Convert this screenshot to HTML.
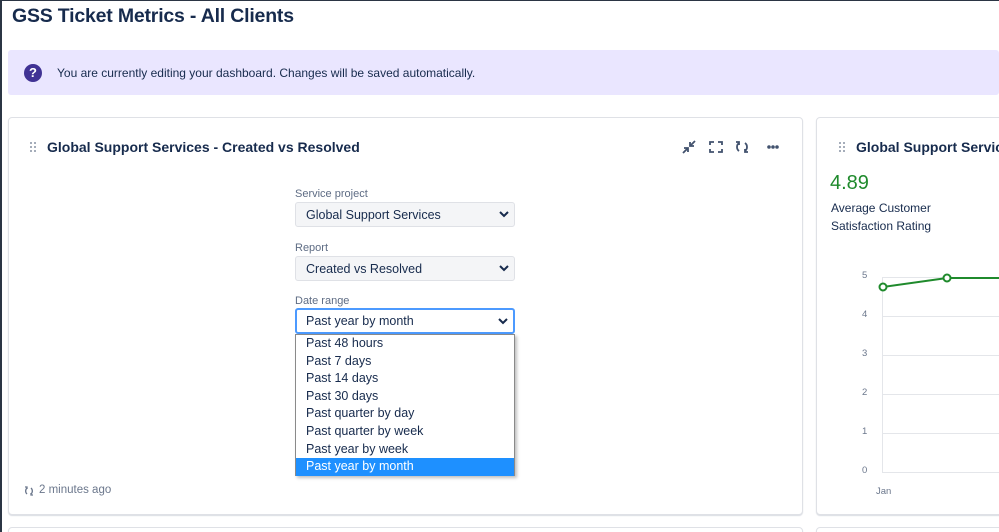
<!DOCTYPE html>
<html style="overflow:hidden"><head><style>
*{box-sizing:border-box;margin:0;padding:0}
html,body{width:999px;height:532px;overflow:hidden}
body{background:#fff;font-family:"Liberation Sans",sans-serif;color:#172b4d;position:relative}
.abs{position:absolute}
h1{position:absolute;left:12px;top:5px;font-size:19.5px;font-weight:bold;color:#172b4d;letter-spacing:-0.2px}
.banner{left:8px;top:50px;width:991px;height:45px;background:#eae6ff;border-radius:3px}
.q{left:24px;top:64px;width:18px;height:18px;border-radius:50%;background:#403294;color:#fff;font-size:13px;font-weight:bold;text-align:center;line-height:18px}
.card{border:1px solid #dfe1e6;border-radius:4px;background:#fff;box-shadow:0 1px 1px rgba(9,30,66,.15)}
.lbl{font-size:11px;color:#5e6c84}
.sel{width:220px;height:25px;background:#f4f5f7;border:1px solid #dfe1e6;border-radius:3px;font-size:12.5px;padding:5px 10px;color:#172b4d}
.sel svg{position:absolute;right:5px;top:8px}
.dd{left:295px;top:334px;width:220px;height:142px;border:1px solid #8a8a8a;background:#fff;font-size:12.5px;box-shadow:2px 2px 3px rgba(0,0,0,.25)}
.dd div{height:17.6px;line-height:17.6px;padding-left:10px;color:#172b4d}
.dd .on{background:#1e90ff;color:#fff}
.yl{font-size:9.5px;color:#6b778c;left:862px}
.gl{left:882px;width:117px;height:1px;background:#e4e6ea}
</style></head><body>
<div class="abs" style="left:0;top:0;width:2px;height:532px;background:#2b3544"></div>
<div class="abs" style="left:0;top:0;width:999px;height:1px;background:#2b3544"></div>
<h1>GSS Ticket Metrics - All Clients</h1>
<div class="abs banner"></div>
<div class="abs q">?</div>
<div class="abs" style="left:57px;top:66px;font-size:12px;color:#172b4d">You are currently editing your dashboard. Changes will be saved automatically.</div>

<div class="abs card" style="left:8px;top:117px;width:795px;height:398px"></div>
<div class="abs card" style="left:816px;top:117px;width:200px;height:398px"></div>
<div class="abs card" style="left:8px;top:527px;width:795px;height:20px"></div>
<div class="abs card" style="left:816px;top:527px;width:200px;height:20px"></div>

<svg class="abs" style="left:30px;top:142px" width="8" height="11"><g fill="#a5adba"><rect x="0" y="0" width="2" height="2"/><rect x="4" y="0" width="2" height="2"/><rect x="0" y="4" width="2" height="2"/><rect x="4" y="4" width="2" height="2"/><rect x="0" y="8" width="2" height="2"/><rect x="4" y="8" width="2" height="2"/></g></svg>
<div class="abs" style="left:47px;top:139px;font-size:14px;font-weight:bold;color:#172b4d">Global Support Services - Created vs Resolved</div>

<svg class="abs" style="left:681px;top:139px" width="100" height="16" fill="none" stroke="#42526e" stroke-width="1.8">
<path d="M2 14l5-5M3 9h4v4M14 2l-5 5M9 3v4h4"/>
<path d="M29 6V3h4M37 3h4v3M41 10v3h-4M33 13h-4v-3"/>
<path d="M58 4a5 5 0 0 0 0 8M55 3h3v3M64 12a5 5 0 0 0 0-8M67 13h-3v-3"/>
<circle cx="88" cy="8" r=".9" fill="#42526e"/><circle cx="92" cy="8" r=".9" fill="#42526e"/><circle cx="96" cy="8" r=".9" fill="#42526e"/>
</svg>

<div class="abs lbl" style="left:295px;top:188px">Service project</div>
<div class="abs sel" style="left:295px;top:202px">Global Support Services<svg width="10" height="7"><path d="M1 1l4 4 4-4" stroke="#172b4d" stroke-width="2" fill="none"/></svg></div>
<div class="abs lbl" style="left:295px;top:242px">Report</div>
<div class="abs sel" style="left:295px;top:256px">Created vs Resolved<svg width="10" height="7"><path d="M1 1l4 4 4-4" stroke="#172b4d" stroke-width="2" fill="none"/></svg></div>
<div class="abs lbl" style="left:295px;top:295px">Date range</div>
<div class="abs sel" style="left:295px;top:308px;height:26px;background:#fff;border:2px solid #4c9aff;padding:4px 9px">Past year by month<svg width="10" height="7"><path d="M1 1l4 4 4-4" stroke="#172b4d" stroke-width="2" fill="none"/></svg></div>
<div class="abs dd">
<div>Past 48 hours</div><div>Past 7 days</div><div>Past 14 days</div><div>Past 30 days</div><div>Past quarter by day</div><div>Past quarter by week</div><div>Past year by week</div><div class="on">Past year by month</div>
</div>

<svg class="abs" style="left:24px;top:486px" width="10" height="10" fill="none" stroke="#6b778c" stroke-width="1.3"><path d="M3 2a4 4 0 0 0 0 6M1 1h2v2M7 8a4 4 0 0 0 0-6M9 9H7V7"/></svg>
<div class="abs" style="left:39px;top:484px;font-size:11.5px;color:#6b778c">2 minutes ago</div>

<svg class="abs" style="left:839px;top:142px" width="8" height="11"><g fill="#a5adba"><rect x="0" y="0" width="2" height="2"/><rect x="4" y="0" width="2" height="2"/><rect x="0" y="4" width="2" height="2"/><rect x="4" y="4" width="2" height="2"/><rect x="0" y="8" width="2" height="2"/><rect x="4" y="8" width="2" height="2"/></g></svg>
<div class="abs" style="left:856px;top:139px;font-size:14px;font-weight:bold;color:#172b4d;white-space:nowrap">Global Support Services</div>
<div class="abs" style="left:830px;top:172px;font-size:20px;color:#1f8a2c">4.89</div>
<div class="abs" style="left:831px;top:199px;font-size:12px;line-height:18px;color:#172b4d">Average Customer<br>Satisfaction Rating</div>

<div class="abs yl" style="top:270px">5</div>
<div class="abs yl" style="top:309px">4</div>
<div class="abs yl" style="top:348px">3</div>
<div class="abs yl" style="top:387px">2</div>
<div class="abs yl" style="top:426px">1</div>
<div class="abs yl" style="top:465px">0</div>
<div class="abs gl" style="top:277px"></div>
<div class="abs gl" style="top:316px"></div>
<div class="abs gl" style="top:355px"></div>
<div class="abs gl" style="top:394px"></div>
<div class="abs gl" style="top:433px"></div>
<div class="abs gl" style="top:472px"></div>
<div class="abs" style="left:882px;top:277px;width:1px;height:196px;background:#e4e6ea"></div>
<div class="abs" style="left:876px;top:486px;font-size:9.5px;color:#6b778c">Jan</div>
<svg class="abs" style="left:870px;top:265px" width="129" height="35" fill="none" stroke="#1f8a2c" stroke-width="2">
<path d="M13 22L77 13H129"/>
<circle cx="13" cy="22" r="3.5" fill="#fff"/><circle cx="77" cy="13" r="3.5" fill="#fff"/>
</svg>
</body></html>
